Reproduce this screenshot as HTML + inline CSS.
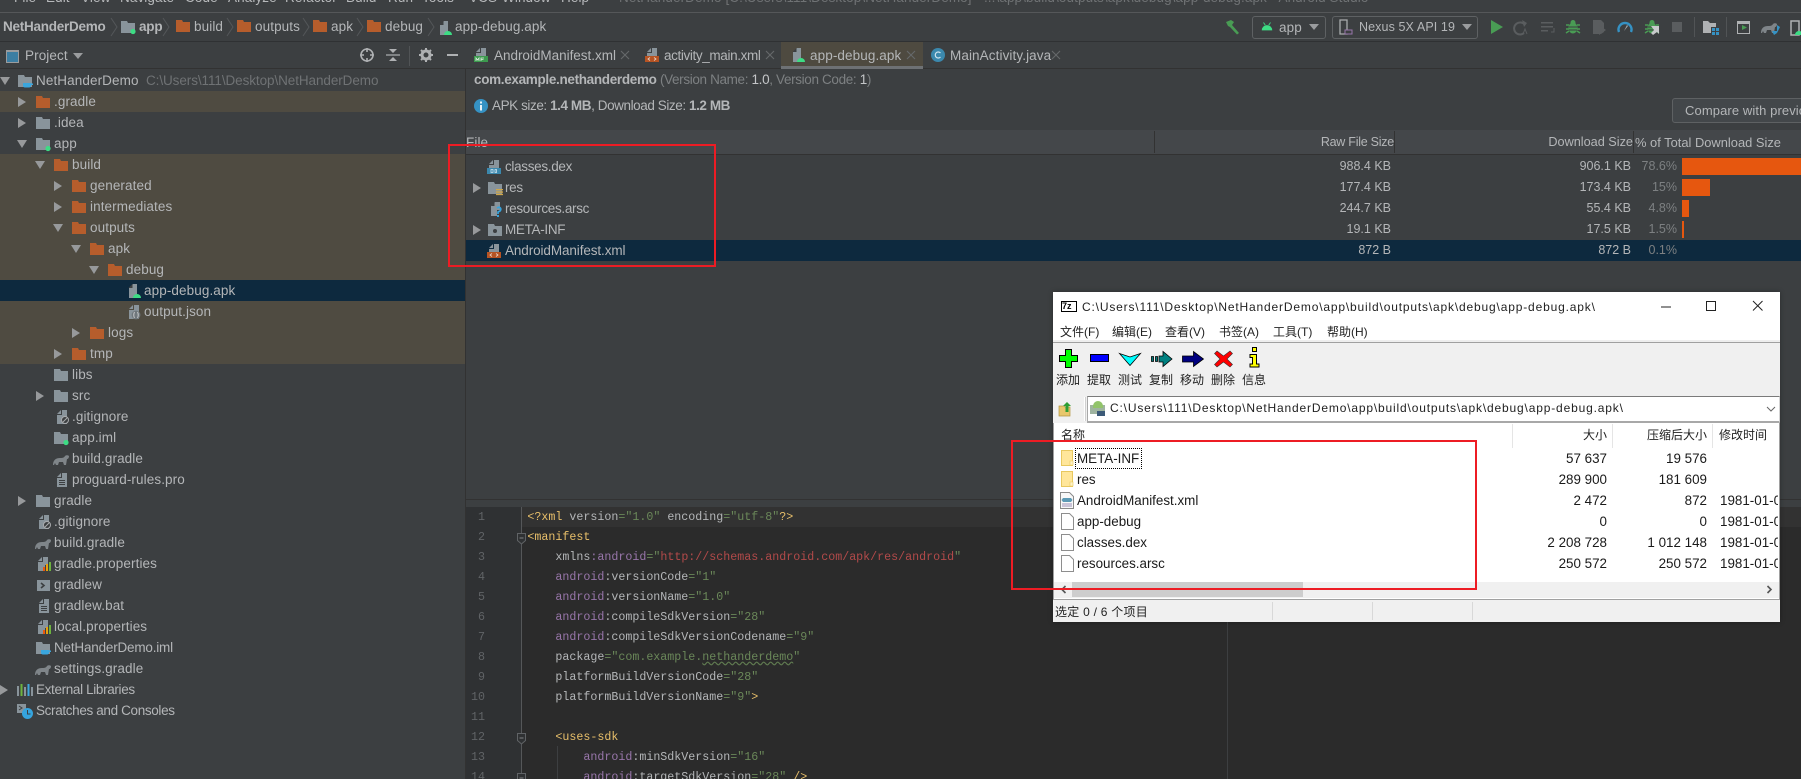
<!DOCTYPE html>
<html><head><meta charset="utf-8"><title>Android Studio</title>
<style>
html,body{margin:0;padding:0;background:#3c3f41}
#p{position:relative;width:1801px;height:779px;overflow:hidden;background:#3c3f41;font-family:"Liberation Sans","Noto Sans CJK SC",sans-serif;font-size:13.5px;letter-spacing:.1px;color:#b4b6b8}
#p div,#p span.t,#p svg{position:absolute}
.t{white-space:nowrap;line-height:21px}
.b{position:absolute}
svg{width:16px;height:16px;overflow:hidden}
svg.n{overflow:visible}
.row{left:0;width:465px;height:21px}
.row svg{top:3px}
.row .t{top:0}
.rt{text-align:right}
.dim{color:#7d8082}
.num{font-size:12.5px;letter-spacing:0}
.nm{letter-spacing:-.32px}
.cl{position:absolute;font-family:"Liberation Mono",monospace;font-size:11.67px;letter-spacing:0;line-height:20px;white-space:pre;left:527.4px;color:#a9b7c6}
.ln{position:absolute;font-family:"Liberation Mono",monospace;font-size:11.67px;letter-spacing:0;line-height:20px;color:#606366;width:40px;left:445px;text-align:right}
.a{color:#9876aa}.s{color:#6a8759}.g{color:#e8bf6a}.u{color:#b24a4a}.x{color:#b4b6b8}
.w{font-size:13.4px;letter-spacing:0;color:#1a1a1a}
.z{font-size:12px;letter-spacing:0;color:#222;line-height:18px;white-space:nowrap;position:absolute;font-family:"Liberation Sans","Noto Sans CJK SC",sans-serif}
</style></head><body>
<svg width="0" height="0" style="display:none">
<defs>
<symbol id="ar" viewBox="0 0 16 16"><path d="M4 3l8 5-8 5z" fill="#97999b"/></symbol>
<symbol id="ad" viewBox="0 0 16 16"><path d="M3 4h10l-5 8z" fill="#97999b"/></symbol>
<symbol id="fo" viewBox="0 0 16 16"><path d="M1 2h6l1 2h7v10H1z" fill="#b65d2c"/></symbol>
<symbol id="fg" viewBox="0 0 16 16"><path d="M1 2h6l1 2h7v10H1z" fill="#89949b"/></symbol>
<symbol id="fm" viewBox="0 0 16 16"><path d="M1 2h6l1 2h7v10H1z" fill="#89949b"/><circle cx="13" cy="12.5" r="2.6" fill="#3ddc84"/></symbol>
<symbol id="fj" viewBox="0 0 16 16"><path d="M1 2h6l1 2h7v10H1z" fill="#89949b"/><path d="M6 10h8v2.5a2 2 0 0 1-2 2H8a2 2 0 0 1-2-2z" fill="#3aa6dd"/><path d="M14 10.5h2v1.5h-2z" fill="#3aa6dd"/></symbol>
<symbol id="fr" viewBox="0 0 16 16"><path d="M1 2h6l1 2h7v10H1z" fill="#89949b"/><path d="M9 9h7v1.3H9zM9 11.4h7v1.3H9zM9 13.8h7v1.3H9z" fill="#d0a74a"/></symbol>
<symbol id="fi" viewBox="0 0 16 16"><path d="M1 2h6l1 2h7v10H1z" fill="#89949b"/><circle cx="8" cy="9" r="2" fill="#3c3f41"/></symbol>
<symbol id="da" viewBox="0 0 16 16"><path d="M7 1h4v14H3V5z" fill="#89949b"/><path d="M6.500 1v4H2.500z" fill="#3c3f41"/><path d="M7 15a4 4 0 0 1 8 0z" fill="#3ddc84"/></symbol>
<symbol id="dj" viewBox="0 0 16 16"><path d="M8 1h5v14H3V6h5z" fill="#89949b"/><path d="M7 1v4H3z" fill="#89949b"/><circle cx="10" cy="11" r="4.400" fill="#6f777c"/><path d="M8.500 8c-1 2-1 4 0 6M11.500 8c1 2 1 4 0 6" stroke="#c5c7c9" fill="none"/></symbol>
<symbol id="dn" viewBox="0 0 16 16"><path d="M8 1h5v14H3V6h5z" fill="#89949b"/><path d="M7 1v4H3z" fill="#89949b"/><circle cx="11" cy="11" r="3.500" fill="#3c3f41" stroke="#a9abad"/><path d="M9 13l4-4" stroke="#a9abad"/></symbol>
<symbol id="dt" viewBox="0 0 16 16"><path d="M8 1h5v14H3V6h5z" fill="#89949b"/><path d="M7 1v4H3z" fill="#89949b"/><path d="M5 8h6v1H5zM5 10h6v1H5zM5 12h6v1H5z" fill="#3c3f41"/></symbol>
<symbol id="dp" viewBox="0 0 16 16"><path d="M7 1h5v8H9v6H2V6h5z" fill="#89949b"/><path d="M6 1v4H2z" fill="#89949b"/><path d="M7 11h2v4H7z" fill="#e8590f"/><path d="M10 8h2v7h-2z" fill="#e8a00f"/><path d="M13 6h2v9h-2z" fill="#6db33f"/></symbol>
<symbol id="ge" viewBox="0 0 16 16"><path d="M0 14c0-5 3-7 7-7 2 0 4 0 5-2 1-1 3-1 4 0 0 2-1 3-2 3l-1 6h-2l-1-3H6l-1 3H3l-1-2-1 2z" fill="#7f8589"/></symbol>
<symbol id="sh" viewBox="0 0 16 16"><path d="M1 3h13v11H1z" fill="#89949b"/><path d="M5 6l3 2.500L5 11" stroke="#3c3f41" stroke-width="1.600" fill="none"/></symbol>
<symbol id="li" viewBox="0 0 16 16"><path d="M0 4h2v10H0z" fill="#89949b"/><path d="M3.500 2h2v12h-2z" fill="#6db33f"/><path d="M7 5h2v9H7z" fill="#89949b"/><path d="M10.500 2h2v12h-2z" fill="#3aa6dd"/><path d="M14 5h2v9h-2z" fill="#89949b"/></symbol>
<symbol id="sc" viewBox="0 0 16 16"><path d="M0 1h9v9H0z" fill="#89949b"/><path d="M2 3l3 2-3 2" stroke="#3c3f41" fill="none"/><circle cx="10.500" cy="10.500" r="5.500" fill="#35a4de"/><path d="M10.500 7v4h3" stroke="#3c3f41" fill="none"/></symbol>
<symbol id="dx" viewBox="0 0 16 16"><path d="M8 1h5v8H3V6h5z" fill="#89949b"/><path d="M7 1v4H3z" fill="#89949b"/><path d="M1 9h14v6H1z" fill="#3b88ad"/><path d="M5 10.500h2v3H5zM9 10.500h1.500v3H9z" fill="none" stroke="#cfe3ee" stroke-width=".8"/></symbol>
<symbol id="dq" viewBox="0 0 16 16"><path d="M7 1h5v8H9v6H3V5z" fill="#89949b"/><path d="M6.500 1v4H3z" fill="#3c3f41"/><path d="M9 7c3-2 5 1 3 3l-2 1v2" stroke="#35a4de" stroke-width="1.700" fill="none"/><path d="M9 14h2v2H9z" fill="#35a4de"/></symbol>
<symbol id="xm" viewBox="0 0 16 16"><path d="M8 1h5v8H3V6h5z" fill="#89949b"/><path d="M7 1v4H3z" fill="#89949b"/><path d="M1 9h14v6H1z" fill="#b65323"/><path d="M6 10.500L4 12l2 1.500M10 10.500l2 1.500-2 1.500" stroke="#e8d5c8" fill="none" stroke-width=".8"/></symbol>
<symbol id="mf" viewBox="0 0 16 16"><path d="M8 1h5v8H3V6h5z" fill="#89949b"/><path d="M7 1v4H3z" fill="#89949b"/><path d="M1 9h14v6H1z" fill="#3c9a4e"/><path d="M3 14v-3l1.500 2 1.500-2v3M8 14v-3h3M8 12.500h2.500" stroke="#dcefe0" fill="none" stroke-width=".8"/></symbol>
<symbol id="xx" viewBox="0 0 10 10"><path d="M1 1l8 8M9 1l-8 8" stroke="#66696b" stroke-width="1.100"/></symbol>
<symbol id="ch" viewBox="0 0 8 20"><path d="M1 1l6 9-6 9" stroke="#54575a" fill="none"/></symbol>
<symbol id="dv" viewBox="0 0 10 6"><path d="M0 0h10L5 6z" fill="#9a9c9e"/></symbol>
<symbol id="an" viewBox="0 0 16 12"><path d="M2 11a6 6 0 0 1 12 0z" fill="#3ddc84"/><path d="M4 2l2 3M12 2l-2 3" stroke="#3ddc84"/></symbol>
<symbol id="bug" viewBox="0 0 16 16"><ellipse cx="8" cy="9" rx="4.500" ry="5.500" fill="#499c54"/><circle cx="8" cy="3.500" r="2.500" fill="#499c54"/><path d="M1 6h3M12 6h3M1 10h3M12 10h3M1 14l3-2M15 14l-3-2" stroke="#499c54" stroke-width="1.500"/><path d="M4 8h8M4 11h8" stroke="#3c3f41"/></symbol>
</defs>
</svg>
<div id="p">
<!-- top menu clipped -->
<div class="b" style="left:0;top:12px;width:1801px;height:1px;background:#555759"></div>
<span class="t" style="left:14px;top:-13px;color:#b7b9bb">File</span>
<span class="t" style="left:46px;top:-13px;color:#b7b9bb">Edit</span>
<span class="t" style="left:81px;top:-13px;color:#b7b9bb">View</span>
<span class="t" style="left:120px;top:-13px;color:#b7b9bb">Navigate</span>
<span class="t" style="left:185px;top:-13px;color:#b7b9bb">Code</span>
<span class="t" style="left:228px;top:-13px;color:#b7b9bb">Analyze</span>
<span class="t" style="left:285px;top:-13px;color:#b7b9bb">Refactor</span>
<span class="t" style="left:346px;top:-13px;color:#b7b9bb">Build</span>
<span class="t" style="left:388px;top:-13px;color:#b7b9bb">Run</span>
<span class="t" style="left:422px;top:-13px;color:#b7b9bb">Tools</span>
<span class="t" style="left:469px;top:-13px;color:#b7b9bb">VCS</span>
<span class="t" style="left:502px;top:-13px;color:#b7b9bb">Window</span>
<span class="t" style="left:561px;top:-13px;color:#b7b9bb">Help</span>
<span class="t" style="left:619px;top:-13px;color:#6f7274">NetHanderDemo [C:\Users\111\Desktop\NetHanderDemo] - ...\app\build\outputs\apk\debug\app-debug.apk - Android Studio</span>

<!-- breadcrumb -->
<div class="b" style="left:0;top:41px;width:1801px;height:1px;background:#2f3133"></div>
<span class="t" style="left:3px;top:16px;font-weight:bold;letter-spacing:-.25px">NetHanderDemo</span>
<svg class="n" style="left:110px;top:17px;width:8px;height:20px"><use href="#ch"/></svg>
<svg style="left:120px;top:19px"><use href="#fm"/></svg>
<span class="t" style="left:139px;top:16px;font-weight:bold;letter-spacing:-.2px">app</span>
<svg class="n" style="left:162px;top:17px;width:8px;height:20px"><use href="#ch"/></svg>
<svg style="left:175px;top:18px"><use href="#fo"/></svg>
<span class="t" style="left:194px;top:16px">build</span>
<svg class="n" style="left:226px;top:17px;width:8px;height:20px"><use href="#ch"/></svg>
<svg style="left:236px;top:18px"><use href="#fo"/></svg>
<span class="t" style="left:255px;top:16px">outputs</span>
<svg class="n" style="left:302px;top:17px;width:8px;height:20px"><use href="#ch"/></svg>
<svg style="left:312px;top:18px"><use href="#fo"/></svg>
<span class="t" style="left:331px;top:16px">apk</span>
<svg class="n" style="left:356px;top:17px;width:8px;height:20px"><use href="#ch"/></svg>
<svg style="left:366px;top:18px"><use href="#fo"/></svg>
<span class="t" style="left:385px;top:16px">debug</span>
<svg class="n" style="left:427px;top:17px;width:8px;height:20px"><use href="#ch"/></svg>
<svg style="left:437px;top:20px"><use href="#da"/></svg>
<span class="t" style="left:455px;top:16px">app-debug.apk</span>

<!-- run toolbar -->
<svg class="n" style="left:1224px;top:19px"><path d="M2 3l5-2 3 2-2 3 7 8-2 1.500L6 8 4 7z" fill="#499c54"/></svg>
<div class="b" style="left:1252px;top:16px;width:72px;height:21px;border:1px solid #5e6163;border-radius:3px"></div>
<svg class="n" style="left:1260px;top:20px;width:14px;height:12px"><use href="#an"/></svg>
<span class="t" style="left:1279px;top:17px">app</span>
<svg class="n" style="left:1309px;top:24px;width:10px;height:6px"><use href="#dv"/></svg>
<div class="b" style="left:1332px;top:16px;width:144px;height:21px;border:1px solid #5e6163;border-radius:3px"></div>
<svg class="n" style="left:1337px;top:19px"><path d="M3 1h7v14H3z" fill="none" stroke="#a9abad" stroke-width="1.300"/><path d="M8 11h7v4H8z" fill="#3c3f41" stroke="#9876aa"/></svg>
<span class="t" style="left:1359px;top:17px;font-size:12.5px">Nexus 5X API 19</span>
<svg class="n" style="left:1462px;top:24px;width:10px;height:6px"><use href="#dv"/></svg>
<svg class="n" style="left:1489px;top:19px"><path d="M2 1l12 7-12 7z" fill="#499c54"/></svg>
<svg class="n" style="left:1513px;top:19px"><path d="M12 6a6 6 0 1 0-1 8" stroke="#5a5d5f" stroke-width="2" fill="none"/><path d="M9 1l5 3-3 4z" fill="#5a5d5f"/><path d="M10 15l2-5 2 5" stroke="#5a5d5f" fill="none"/></svg>
<svg class="n" style="left:1540px;top:19px"><path d="M1 3h12v1.500H1zM1 7h12v1.500H1zM1 11h7v1.500H1z" fill="#5a5d5f"/><path d="M14 9v4h-3" stroke="#5a5d5f" fill="none"/></svg>
<svg class="n" style="left:1565px;top:19px"><use href="#bug"/></svg>
<svg class="n" style="left:1591px;top:19px"><path d="M2 1h8l3 3v9l-3 2H2z" fill="#5a5d5f"/><path d="M8 6l7 5-7 5z" fill="#5a5d5f"/></svg>
<svg class="n" style="left:1617px;top:19px"><path d="M2 13a6.500 6.500 0 1 1 12 0" fill="none" stroke="#3592c4" stroke-width="2.400"/><path d="M7 12l3-6 1 1z" fill="#a9abad"/></svg>
<svg class="n" style="left:1644px;top:19px"><use href="#bug"/></svg>
<svg class="n" style="left:1650px;top:25px;width:10px;height:10px" viewBox="0 0 10 10"><path d="M1 1h8v8L7 7 3 10 1 8l3-3z" fill="#c7c9cb"/></svg>
<div class="b" style="left:1672px;top:22px;width:10px;height:10px;background:#5a5d5f"></div>
<div class="b" style="left:1694px;top:17px;width:1px;height:20px;background:#515456"></div>
<svg class="n" style="left:1703px;top:20px"><path d="M0 1h5l2 2h6v4H8v6H0z" fill="#afb1b3"/><path d="M9 8h3v3H9zM13 8h3v3h-3zM9 12h3v3H9zM13 12h3v3h-3z" fill="#3592c4"/></svg>
<div class="b" style="left:1726px;top:17px;width:1px;height:20px;background:#515456"></div>
<div class="b" style="left:1737px;top:21px;width:11px;height:9px;border:1.500px solid #afb1b3;border-top-width:3px"></div>
<svg class="n" style="left:1741px;top:24px;width:7px;height:7px" viewBox="0 0 7 7"><path d="M1 1l5 2.500L1 6z" fill="#499c54"/></svg>
<svg class="n" style="left:1761px;top:19px"><use href="#ge"/></svg>
<svg class="n" style="left:1761px;top:19px"><path d="M16 6v6h-5l2 4 3-2 3-6z" fill="#3592c4"/></svg>
<svg class="n" style="left:1790px;top:20px"><path d="M1 1h8v14H1z" fill="none" stroke="#afb1b3" stroke-width="1.500"/><path d="M5 15a4 4 0 0 1 8 0z" fill="#3ddc84"/></svg>

<!-- project toolbar -->
<div class="b" style="left:0;top:68px;width:1801px;height:1px;background:#323232"></div>
<div class="b" style="left:6px;top:50px;width:11px;height:10px;background:#3b7ea3;border:1px solid #9a9c9e;border-top-width:2px"></div>
<span class="t" style="left:25px;top:45px">Project</span>
<svg class="n" style="left:73px;top:53px;width:10px;height:6px"><use href="#dv"/></svg>
<svg class="n" style="left:359px;top:47px"><circle cx="8" cy="8" r="6" fill="none" stroke="#afb1b3" stroke-width="1.600"/><path d="M8 1v4M8 11v4M1 8h4M11 8h4" stroke="#afb1b3" stroke-width="1.600"/></svg>
<svg class="n" style="left:385px;top:47px"><path d="M1 8h14" stroke="#afb1b3" stroke-width="1.200"/><path d="M4 2h8L8 6zM4 14h8L8 10z" fill="#afb1b3"/></svg>
<div class="b" style="left:409px;top:46px;width:1px;height:20px;background:#515456"></div>
<svg class="n" style="left:418px;top:47px"><circle cx="8" cy="8" r="4" fill="none" stroke="#afb1b3" stroke-width="3"/><path d="M8 1v3M8 12v3M1 8h3M12 8h3M3 3l2 2M11 11l2 2M13 3l-2 2M5 11l-2 2" stroke="#afb1b3" stroke-width="2"/></svg>
<div class="b" style="left:447px;top:54px;width:11px;height:2px;background:#afb1b3"></div>

<!-- tree -->
<div class="b" style="left:465px;top:69px;width:1px;height:710px;background:#323232"></div>
<div class="b row" style="top:70px"><svg style="left:-3px"><use href="#ad"/></svg><svg style="left:17px"><use href="#fj"/></svg><span class="t" style="left:36px">NetHanderDemo</span><span class="t dim" style="left:146px;color:#6f7274;letter-spacing:-.08px">C:\Users\111\Desktop\NetHanderDemo</span></div>
<div class="b row" style="top:91px;background:#4f4b41"><svg style="left:14px"><use href="#ar"/></svg><svg style="left:35px"><use href="#fo"/></svg><span class="t" style="left:54px">.gradle</span></div>
<div class="b row" style="top:112px"><svg style="left:14px"><use href="#ar"/></svg><svg style="left:35px"><use href="#fg"/></svg><span class="t" style="left:54px">.idea</span></div>
<div class="b row" style="top:133px"><svg style="left:14px"><use href="#ad"/></svg><svg style="left:35px"><use href="#fm"/></svg><span class="t" style="left:54px">app</span></div>
<div class="b row" style="top:154px;background:#4f4b41"><svg style="left:32px"><use href="#ad"/></svg><svg style="left:53px"><use href="#fo"/></svg><span class="t" style="left:72px">build</span></div>
<div class="b row" style="top:175px;background:#4f4b41"><svg style="left:50px"><use href="#ar"/></svg><svg style="left:71px"><use href="#fo"/></svg><span class="t" style="left:90px">generated</span></div>
<div class="b row" style="top:196px;background:#4f4b41"><svg style="left:50px"><use href="#ar"/></svg><svg style="left:71px"><use href="#fo"/></svg><span class="t" style="left:90px">intermediates</span></div>
<div class="b row" style="top:217px;background:#4f4b41"><svg style="left:50px"><use href="#ad"/></svg><svg style="left:71px"><use href="#fo"/></svg><span class="t" style="left:90px">outputs</span></div>
<div class="b row" style="top:238px;background:#4f4b41"><svg style="left:68px"><use href="#ad"/></svg><svg style="left:89px"><use href="#fo"/></svg><span class="t" style="left:108px">apk</span></div>
<div class="b row" style="top:259px;background:#4f4b41"><svg style="left:86px"><use href="#ad"/></svg><svg style="left:107px"><use href="#fo"/></svg><span class="t" style="left:126px">debug</span></div>
<div class="b row" style="top:280px;background:#0d293e"><svg style="left:126px"><use href="#da"/></svg><span class="t" style="left:144px">app-debug.apk</span></div>
<div class="b row" style="top:301px;background:#4f4b41"><svg style="left:126px"><use href="#dj"/></svg><span class="t" style="left:144px">output.json</span></div>
<div class="b row" style="top:322px;background:#4f4b41"><svg style="left:68px"><use href="#ar"/></svg><svg style="left:89px"><use href="#fo"/></svg><span class="t" style="left:108px">logs</span></div>
<div class="b row" style="top:343px;background:#4f4b41"><svg style="left:50px"><use href="#ar"/></svg><svg style="left:71px"><use href="#fo"/></svg><span class="t" style="left:90px">tmp</span></div>
<div class="b row" style="top:364px"><svg style="left:53px"><use href="#fg"/></svg><span class="t" style="left:72px">libs</span></div>
<div class="b row" style="top:385px"><svg style="left:32px"><use href="#ar"/></svg><svg style="left:53px"><use href="#fg"/></svg><span class="t" style="left:72px">src</span></div>
<div class="b row" style="top:406px"><svg style="left:54px"><use href="#dn"/></svg><span class="t" style="left:72px">.gitignore</span></div>
<div class="b row" style="top:427px"><svg style="left:53px"><use href="#fm"/></svg><span class="t" style="left:72px">app.iml</span></div>
<div class="b row" style="top:448px"><svg style="left:53px"><use href="#ge"/></svg><span class="t" style="left:72px">build.gradle</span></div>
<div class="b row" style="top:469px"><svg style="left:54px"><use href="#dt"/></svg><span class="t" style="left:72px">proguard-rules.pro</span></div>
<div class="b row" style="top:490px"><svg style="left:14px"><use href="#ar"/></svg><svg style="left:35px"><use href="#fg"/></svg><span class="t" style="left:54px">gradle</span></div>
<div class="b row" style="top:511px"><svg style="left:36px"><use href="#dn"/></svg><span class="t" style="left:54px">.gitignore</span></div>
<div class="b row" style="top:532px"><svg style="left:35px"><use href="#ge"/></svg><span class="t" style="left:54px">build.gradle</span></div>
<div class="b row" style="top:553px"><svg style="left:36px"><use href="#dp"/></svg><span class="t" style="left:54px">gradle.properties</span></div>
<div class="b row" style="top:574px"><svg style="left:36px"><use href="#sh"/></svg><span class="t" style="left:54px">gradlew</span></div>
<div class="b row" style="top:595px"><svg style="left:36px"><use href="#dt"/></svg><span class="t" style="left:54px">gradlew.bat</span></div>
<div class="b row" style="top:616px"><svg style="left:36px"><use href="#dp"/></svg><span class="t" style="left:54px">local.properties</span></div>
<div class="b row" style="top:637px"><svg style="left:35px"><use href="#fj"/></svg><span class="t" style="left:54px;letter-spacing:-.2px">NetHanderDemo.iml</span></div>
<div class="b row" style="top:658px"><svg style="left:35px"><use href="#ge"/></svg><span class="t" style="left:54px">settings.gradle</span></div>
<div class="b row" style="top:679px"><svg style="left:-4px"><use href="#ar"/></svg><svg style="left:17px"><use href="#li"/></svg><span class="t" style="left:36px;letter-spacing:-.35px">External Libraries</span></div>
<div class="b row" style="top:700px"><svg style="left:17px"><use href="#sc"/></svg><span class="t" style="left:36px;letter-spacing:-.35px">Scratches and Consoles</span></div>

<!-- tabs -->
<svg style="left:473px;top:47px"><use href="#mf"/></svg>
<span class="t" style="left:494px;top:45px;letter-spacing:-.02px">AndroidManifest.xml</span>
<svg class="n" style="left:620px;top:50px;width:10px;height:10px"><use href="#xx"/></svg>
<svg style="left:644px;top:47px"><use href="#xm"/></svg>
<span class="t" style="left:664px;top:45px;letter-spacing:-.37px">activity_main.xml</span>
<svg class="n" style="left:765px;top:50px;width:10px;height:10px"><use href="#xx"/></svg>
<div class="b" style="left:781px;top:42px;width:142px;height:24px;background:#4e4a40"></div>
<div class="b" style="left:781px;top:66px;width:142px;height:3px;background:#6e7174"></div>
<svg style="left:790px;top:47px"><use href="#da"/></svg>
<span class="t" style="left:810px;top:45px">app-debug.apk</span>
<svg class="n" style="left:906px;top:50px;width:10px;height:10px"><use href="#xx"/></svg>
<svg style="left:930px;top:47px"><circle cx="8" cy="8" r="7" fill="#3b88ad"/><path d="M10.500 6a3 3 0 1 0 0 4" stroke="#cfe3ee" fill="none" stroke-width="1.200"/></svg>
<span class="t" style="left:950px;top:45px">MainActivity.java</span>
<svg class="n" style="left:1051px;top:50px;width:10px;height:10px"><use href="#xx"/></svg>

<!-- apk analyzer info -->
<span class="t" style="left:474px;top:69px;letter-spacing:-.35px"><b style="letter-spacing:-.32px">com.example.nethanderdemo</b> <span class="dim">(Version Name: </span><b style="font-weight:normal;color:#c4c6c8">1.0</b><span class="dim">, Version Code: </span><span style="color:#c4c6c8">1</span><span class="dim">)</span></span>
<svg style="left:473px;top:98px"><circle cx="8" cy="8" r="7" fill="#3592c4"/><path d="M7 3.500h2v2H7zM7 7h2v5.500H7z" fill="#e8f2f8"/></svg>
<span class="t" style="left:492px;top:95px;letter-spacing:-.42px">APK size: <b>1.4 MB</b>, Download Size: <b>1.2 MB</b></span>
<div class="b" style="left:1672px;top:98px;width:140px;height:23px;border:1px solid #5e6163;border-radius:3px;background:#43474a"></div>
<span class="t" style="left:1685px;top:100px;font-size:13px">Compare with previous APK...</span>

<!-- table -->
<div class="b" style="left:466px;top:130px;width:1335px;height:24px;background:#44474a"></div>
<div class="b" style="left:466px;top:154px;width:1335px;height:1px;background:#323232"></div>
<span class="t" style="left:466px;top:132px">File</span>
<div class="b" style="left:1154px;top:131px;width:1px;height:22px;background:#323232"></div>
<div class="b" style="left:1394px;top:131px;width:1px;height:22px;background:#323232"></div>
<div class="b" style="left:1633px;top:131px;width:1px;height:22px;background:#323232"></div>
<span class="t rt" style="left:1200px;width:194px;top:132px;font-size:12.5px;letter-spacing:-.25px">Raw File Size</span>
<span class="t rt" style="left:1440px;width:193px;top:132px;font-size:12.7px;letter-spacing:0">Download Size</span>
<span class="t" style="left:1635px;top:132px;font-size:12.9px;letter-spacing:0">% of Total Download Size</span>

<div class="b" style="left:466px;top:240px;width:1335px;height:21px;background:#0d293e"></div>
<svg style="left:486px;top:159px"><use href="#dx"/></svg><span class="t nm" style="left:505px;top:156px">classes.dex</span>
<svg style="left:469px;top:180px"><use href="#ar"/></svg><svg style="left:487px;top:180px"><use href="#fr"/></svg><span class="t nm" style="left:505px;top:177px">res</span>
<svg style="left:488px;top:201px"><use href="#dq"/></svg><span class="t nm" style="left:505px;top:198px">resources.arsc</span>
<svg style="left:469px;top:222px"><use href="#ar"/></svg><svg style="left:487px;top:222px"><use href="#fi"/></svg><span class="t nm" style="left:505px;top:219px">META-INF</span>
<svg style="left:486px;top:243px"><use href="#xm"/></svg><span class="t nm" style="left:505px;top:240px;letter-spacing:-.1px">AndroidManifest.xml</span>

<span class="t rt num" style="left:1290px;width:101px;top:156px">988.4 KB</span>
<span class="t rt num" style="left:1290px;width:101px;top:177px">177.4 KB</span>
<span class="t rt num" style="left:1290px;width:101px;top:198px">244.7 KB</span>
<span class="t rt num" style="left:1290px;width:101px;top:219px">19.1 KB</span>
<span class="t rt num" style="left:1290px;width:101px;top:240px">872 B</span>
<span class="t rt num" style="left:1530px;width:101px;top:156px">906.1 KB</span>
<span class="t rt num" style="left:1530px;width:101px;top:177px">173.4 KB</span>
<span class="t rt num" style="left:1530px;width:101px;top:198px">55.4 KB</span>
<span class="t rt num" style="left:1530px;width:101px;top:219px">17.5 KB</span>
<span class="t rt num" style="left:1530px;width:101px;top:240px">872 B</span>
<span class="t rt dim num" style="left:1630px;width:47px;top:156px">78.6%</span>
<span class="t rt dim num" style="left:1630px;width:47px;top:177px">15%</span>
<span class="t rt dim num" style="left:1630px;width:47px;top:198px">4.8%</span>
<span class="t rt dim num" style="left:1630px;width:47px;top:219px">1.5%</span>
<span class="t rt dim num" style="left:1630px;width:47px;top:240px">0.1%</span>
<div class="b" style="left:1682px;top:158px;width:119px;height:17px;background:#e6570f"></div>
<div class="b" style="left:1682px;top:179px;width:28px;height:17px;background:#e6570f"></div>
<div class="b" style="left:1682px;top:200px;width:7px;height:17px;background:#e6570f"></div>
<div class="b" style="left:1682px;top:221px;width:2px;height:17px;background:#e6570f"></div>

<!-- editor -->
<div class="b" style="left:466px;top:499px;width:1335px;height:1px;background:#323232"></div>
<div class="b" style="left:466px;top:507px;width:1335px;height:272px;background:#2b2b2b"></div>
<div class="b" style="left:466px;top:507px;width:55px;height:272px;background:#2f3133"></div>
<div class="b" style="left:521px;top:507px;width:1280px;height:20px;background:#323232"></div>
<div class="b" style="left:521px;top:507px;width:1px;height:272px;background:#555759"></div>
<div class="b" style="left:1227px;top:507px;width:1px;height:272px;background:#3d3f41"></div>
<div class="b" style="left:557px;top:746px;width:1px;height:33px;background:#3d3f41"></div>
<svg class="n" style="left:517px;top:533px;width:9px;height:12px" viewBox="0 0 9 12"><path d="M.5.500h8v7L4.500 11 .5 7.500z" fill="#2f3133" stroke="#606366"/><path d="M2.500 5h4" stroke="#808284"/></svg>
<svg class="n" style="left:517px;top:733px;width:9px;height:12px" viewBox="0 0 9 12"><path d="M.5.500h8v7L4.500 11 .5 7.500z" fill="#2f3133" stroke="#606366"/><path d="M2.500 5h4" stroke="#808284"/></svg>
<svg class="n" style="left:517px;top:773px;width:9px;height:12px" viewBox="0 0 9 12"><path d="M.5.500h8v7L4.500 11 .5 7.500z" fill="#2f3133" stroke="#606366"/><path d="M2.500 5h4" stroke="#808284"/></svg>
<span class="ln" style="top:507px">1</span><span class="ln" style="top:527px">2</span><span class="ln" style="top:547px">3</span><span class="ln" style="top:567px">4</span><span class="ln" style="top:587px">5</span><span class="ln" style="top:607px">6</span><span class="ln" style="top:627px">7</span><span class="ln" style="top:647px">8</span><span class="ln" style="top:667px">9</span><span class="ln" style="top:687px">10</span><span class="ln" style="top:707px">11</span><span class="ln" style="top:727px">12</span><span class="ln" style="top:747px">13</span><span class="ln" style="top:767px">14</span>
<span class="cl" style="top:507px"><span class="g">&lt;?xml </span><span class="x">version</span><span class="s">="1.0" </span><span class="x">encoding</span><span class="s">="utf-8"</span><span class="g">?&gt;</span></span>
<span class="cl" style="top:527px"><span class="g">&lt;manifest</span></span>
<span class="cl" style="top:547px">    <span class="x">xmlns</span><span class="a">:android</span><span class="s">="</span><span class="u">http://schemas.android.com/apk/res/android</span><span class="s">"</span></span>
<span class="cl" style="top:567px">    <span class="a">android</span><span class="x">:versionCode</span><span class="s">="1"</span></span>
<span class="cl" style="top:587px">    <span class="a">android</span><span class="x">:versionName</span><span class="s">="1.0"</span></span>
<span class="cl" style="top:607px">    <span class="a">android</span><span class="x">:compileSdkVersion</span><span class="s">="28"</span></span>
<span class="cl" style="top:627px">    <span class="a">android</span><span class="x">:compileSdkVersionCodename</span><span class="s">="9"</span></span>
<span class="cl" style="top:647px">    <span class="x">package</span><span class="s">="com.example.<span style="text-decoration:underline wavy #5f7a50">nethanderdemo</span>"</span></span>
<span class="cl" style="top:667px">    <span class="x">platformBuildVersionCode</span><span class="s">="28"</span></span>
<span class="cl" style="top:687px">    <span class="x">platformBuildVersionName</span><span class="s">="9"</span><span class="g">&gt;</span></span>
<span class="cl" style="top:727px">    <span class="g">&lt;uses-sdk</span></span>
<span class="cl" style="top:747px">        <span class="a">android</span><span class="x">:minSdkVersion</span><span class="s">="16"</span></span>
<span class="cl" style="top:767px">        <span class="a">android</span><span class="x">:targetSdkVersion</span><span class="s">="28"</span> <span class="g">/&gt;</span></span>

<!-- 7z window -->
<div class="b" style="left:1053px;top:292px;width:727px;height:330px;background:#fff;box-shadow:0 0 5px rgba(0,0,0,.3)"></div>
<div class="b" style="left:1061px;top:301px;width:14px;height:9px;border:1.500px solid #000;background:#fff"></div>
<span class="z" style="left:1062px;top:300px;font-size:9px;font-weight:bold;line-height:12px;color:#000;letter-spacing:0">7z</span>
<span class="z w" style="left:1082px;top:298px;letter-spacing:.83px">C:\Users\111\Desktop\NetHanderDemo\app\build\outputs\apk\debug\app-debug.apk\</span>
<svg class="n" style="left:1660px;top:300px"><path d="M1 7h10" stroke="#222"/></svg>
<svg class="n" style="left:1706px;top:300px"><path d="M.5 1.500h9v9h-9z" fill="none" stroke="#222"/></svg>
<svg class="n" style="left:1752px;top:300px"><path d="M1 1l9.500 9.500M10.500 1L1 10.500" stroke="#222"/></svg>
<span class="z" style="left:1060px;top:323px">文件(F)</span>
<span class="z" style="left:1112px;top:323px">编辑(E)</span>
<span class="z" style="left:1165px;top:323px">查看(V)</span>
<span class="z" style="left:1219px;top:323px">书签(A)</span>
<span class="z" style="left:1273px;top:323px">工具(T)</span>
<span class="z" style="left:1327px;top:323px">帮助(H)</span>
<div class="b" style="left:1053px;top:340px;width:727px;height:2px;background:#eee"></div>
<div class="b" style="left:1053px;top:342px;width:727px;height:1px;background:#a0a0a0"></div>
<div class="b" style="left:1053px;top:343px;width:727px;height:80px;background:#f0f0f0"></div>
<!-- toolbar icons -->
<svg class="n" style="left:1059px;top:349px;width:19px;height:19px" viewBox="0 0 19 19"><path d="M6.500.5h6v6h6v6h-6v6h-6v-6h-6v-6h6z" fill="#0f0" stroke="#000"/></svg>
<svg class="n" style="left:1090px;top:354px;width:19px;height:9px" viewBox="0 0 19 9"><path d="M.5.500h18v7H.5z" fill="#00f" stroke="#000"/></svg>
<svg class="n" style="left:1119px;top:353px;width:22px;height:13px" viewBox="0 0 22 13"><path d="M.5.500L11 4l10.500-3.500L11 12.500z" fill="#0ff" stroke="#000" stroke-width=".8"/></svg>
<svg class="n" style="left:1151px;top:351px;width:22px;height:16px" viewBox="0 0 22 16"><path d="M.5 5.500h2v5h-2zM4.500 5.500h2v5h-2zM8 5h4V.5L21 8l-9 7.500V11H8z" fill="#008080" stroke="#000" stroke-width=".8"/></svg>
<svg class="n" style="left:1182px;top:351px;width:22px;height:16px" viewBox="0 0 22 16"><path d="M.5 5h11V.5L21.500 8l-10 7.500V11H.5z" fill="#000080" stroke="#000" stroke-width=".8"/></svg>
<svg class="n" style="left:1214px;top:350px;width:19px;height:18px" viewBox="0 0 19 18"><path d="M3 1l6.500 5L16 1l2.500 2.500L13 9l5.500 5.500L16 17l-6.500-5L3 17 .5 14.500 6 9 .5 3.500z" fill="#f00" stroke="#333" stroke-width=".6"/></svg>
<svg class="n" style="left:1249px;top:347px;width:11px;height:21px" viewBox="0 0 11 21"><path d="M3.500.5h4v4h-4zM1 7.500h6.500V17H10v3H1v-3h2.500v-6.500H1z" fill="#ff0" stroke="#000"/></svg>
<span class="z" style="left:1056px;top:371px">添加</span>
<span class="z" style="left:1087px;top:371px">提取</span>
<span class="z" style="left:1118px;top:371px">测试</span>
<span class="z" style="left:1149px;top:371px">复制</span>
<span class="z" style="left:1180px;top:371px">移动</span>
<span class="z" style="left:1211px;top:371px">删除</span>
<span class="z" style="left:1242px;top:371px">信息</span>
<!-- address -->
<svg class="n" style="left:1058px;top:401px"><path d="M1 5h5l1 1h5v9H1z" fill="#e8c76c" stroke="#b39540" stroke-width=".7"/><path d="M9 1l4 4h-2.500v6h-3V5H5z" fill="#2e9e33"/></svg>
<div class="b" style="left:1084px;top:397px;width:1px;height:24px;background:#fff;border-right:1px solid #d0d0d0"></div>
<div class="b" style="left:1087px;top:396px;width:691px;height:24px;background:#fff;border:1px solid #a8a8a8;border-top-color:#7a7a7a;border-bottom-width:2px;border-right-color:#d4d4d4"></div>
<svg class="n" style="left:1090px;top:401px"><path d="M0 4h15v9H0z" fill="#9fb4a0"/><path d="M3 5a5 5 0 0 1 10 0v2H3z" fill="#92c46a"/><path d="M7 10h8v5H7z" fill="#3c5a78"/></svg>
<span class="z w" style="left:1110px;top:399px;letter-spacing:.83px">C:\Users\111\Desktop\NetHanderDemo\app\build\outputs\apk\debug\app-debug.apk\</span>
<svg class="n" style="left:1766px;top:406px;width:10px;height:6px" viewBox="0 0 10 6"><path d="M1 1l4 4 4-4" stroke="#666" fill="none"/></svg>
<!-- list -->
<div class="b" style="left:1053px;top:423px;width:1px;height:176px;background:#a0a0a0"></div>
<div class="b" style="left:1779px;top:423px;width:1px;height:176px;background:#a0a0a0"></div>
<div class="b" style="left:1054px;top:423px;width:725px;height:159px;background:#fff"></div>
<span class="z" style="left:1061px;top:426px">名称</span>
<div class="b" style="left:1512px;top:424px;width:1px;height:24px;background:#e5e5e5"></div>
<div class="b" style="left:1612px;top:424px;width:1px;height:24px;background:#e5e5e5"></div>
<div class="b" style="left:1712px;top:424px;width:1px;height:24px;background:#e5e5e5"></div>
<span class="z" style="left:1583px;top:426px">大小</span>
<span class="z" style="left:1647px;top:426px">压缩后大小</span>
<span class="z" style="left:1719px;top:426px">修改时间</span>
<svg class="n" style="left:1061px;top:450px;width:13px;height:16px" viewBox="0 0 13 16"><path d="M.5.500h11v15H.5z" fill="#ffe69a" stroke="#e8c85f"/><path d="M9 11h3v4H9z" fill="#fff3c6" stroke="#e8c85f" stroke-width=".6"/></svg>
<svg class="n" style="left:1061px;top:471px;width:13px;height:16px" viewBox="0 0 13 16"><path d="M.5.500h11v15H.5z" fill="#ffe69a" stroke="#e8c85f"/><path d="M9 11h3v4H9z" fill="#fff3c6" stroke="#e8c85f" stroke-width=".6"/></svg>
<svg class="n" style="left:1060px;top:492px;width:14px;height:17px" viewBox="0 0 14 17"><path d="M.5.500h9l4 4v12H.5z" fill="#f8f8f8" stroke="#8a8a8a"/><path d="M3 6l-1.500 2L3 10h8l1.500-2L11 6z" fill="#5d9ab5"/><path d="M2 12h10M2 14h10" stroke="#9b8fb8"/></svg>
<svg class="n" style="left:1061px;top:513px;width:13px;height:17px" viewBox="0 0 13 17"><path d="M.5.500h8l4 4v12H.5z" fill="#fff" stroke="#8e8e8e"/></svg>
<svg class="n" style="left:1061px;top:534px;width:13px;height:17px" viewBox="0 0 13 17"><path d="M.5.500h8l4 4v12H.5z" fill="#fff" stroke="#8e8e8e"/></svg>
<svg class="n" style="left:1061px;top:555px;width:13px;height:17px" viewBox="0 0 13 17"><path d="M.5.500h8l4 4v12H.5z" fill="#fff" stroke="#8e8e8e"/></svg>
<div class="b" style="left:1075px;top:448px;width:65px;height:19px;border:1px dotted #000"></div>
<span class="t w" style="left:1077px;top:448px">META-INF</span>
<span class="t w" style="left:1077px;top:469px">res</span>
<span class="t w" style="left:1077px;top:490px">AndroidManifest.xml</span>
<span class="t w" style="left:1077px;top:511px">app-debug</span>
<span class="t w" style="left:1077px;top:532px">classes.dex</span>
<span class="t w" style="left:1077px;top:553px">resources.arsc</span>
<span class="t w rt" style="left:1500px;width:107px;top:448px">57 637</span>
<span class="t w rt" style="left:1500px;width:107px;top:469px">289 900</span>
<span class="t w rt" style="left:1500px;width:107px;top:490px">2 472</span>
<span class="t w rt" style="left:1500px;width:107px;top:511px">0</span>
<span class="t w rt" style="left:1500px;width:107px;top:532px">2 208 728</span>
<span class="t w rt" style="left:1500px;width:107px;top:553px">250 572</span>
<span class="t w rt" style="left:1600px;width:107px;top:448px">19 576</span>
<span class="t w rt" style="left:1600px;width:107px;top:469px">181 609</span>
<span class="t w rt" style="left:1600px;width:107px;top:490px">872</span>
<span class="t w rt" style="left:1600px;width:107px;top:511px">0</span>
<span class="t w rt" style="left:1600px;width:107px;top:532px">1 012 148</span>
<span class="t w rt" style="left:1600px;width:107px;top:553px">250 572</span>
<div class="b" style="left:1720px;top:490px;width:58px;height:84px;overflow:hidden"><span class="t w" style="left:0;top:0">1981-01-01</span><span class="t w" style="left:0;top:21px">1981-01-01</span><span class="t w" style="left:0;top:42px">1981-01-01</span><span class="t w" style="left:0;top:63px">1981-01-01</span></div>
<!-- scrollbar -->
<div class="b" style="left:1054px;top:582px;width:725px;height:16px;background:#f0f0f0"></div>
<div class="b" style="left:1072px;top:582px;width:231px;height:15px;background:#cdcdcd"></div>
<svg class="n" style="left:1060px;top:585px;width:7px;height:9px" viewBox="0 0 7 9"><path d="M5.500 1L2 4.500 5.500 8" stroke="#555" stroke-width="1.600" fill="none"/></svg>
<svg class="n" style="left:1766px;top:585px;width:7px;height:9px" viewBox="0 0 7 9"><path d="M1.500 1L5 4.500 1.500 8" stroke="#555" stroke-width="1.600" fill="none"/></svg>
<div class="b" style="left:1053px;top:599px;width:727px;height:1px;background:#a0a0a0"></div>
<div class="b" style="left:1053px;top:600px;width:727px;height:22px;background:#f0f0f0"></div>
<div class="b" style="left:1272px;top:602px;width:1px;height:18px;background:#d8d8d8"></div>
<div class="b" style="left:1372px;top:602px;width:1px;height:18px;background:#d8d8d8"></div>
<div class="b" style="left:1472px;top:602px;width:1px;height:18px;background:#d8d8d8"></div>
<span class="z" style="left:1055px;top:603px;letter-spacing:.25px">选定 0 / 6 个项目</span>

<!-- red rects -->
<div class="b" style="left:448px;top:144px;width:264px;height:119px;border:2px solid #ed1c24"></div>
<div class="b" style="left:1011px;top:440px;width:462px;height:146px;border:2px solid #ed1c24"></div>
</div>
</body></html>
